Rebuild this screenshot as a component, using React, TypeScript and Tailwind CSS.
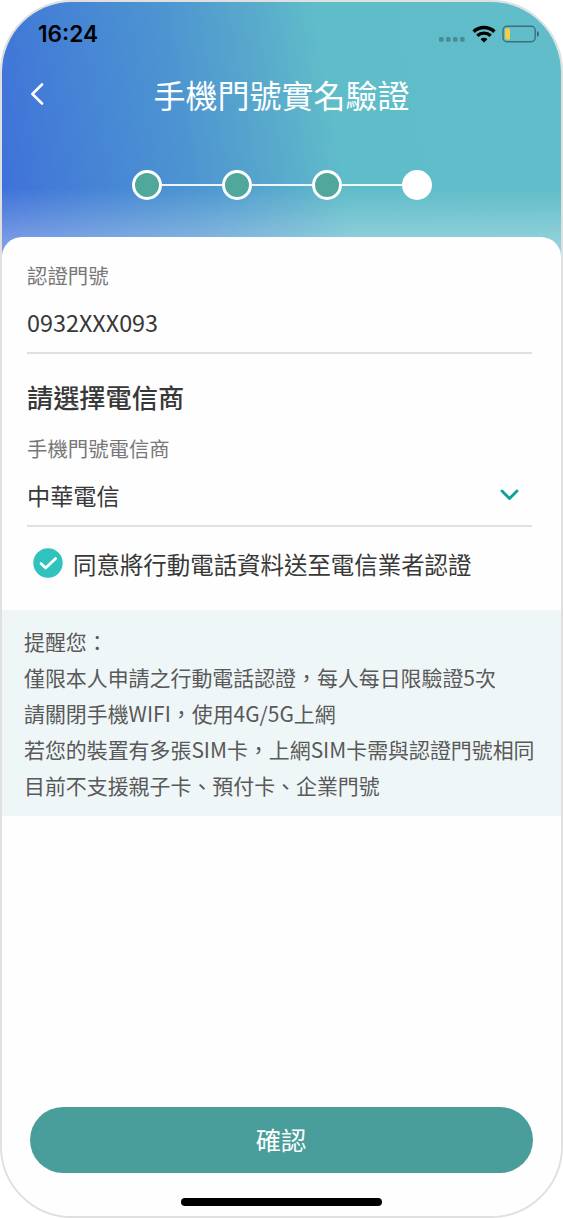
import { useState } from 'react';

const PASOS = [1, 2, 3, 4];
const PASO_ACTUAL = 4;

const AVISOS = [
    '提醒您：',
    '僅限本人申請之行動電話認證，每人每日限驗證5次',
    '請關閉手機WIFI，使用4G/5G上網',
    '若您的裝置有多張SIM卡，上網SIM卡需與認證門號相同',
    '目前不支援親子卡、預付卡、企業門號',
];

const StatusBar = () => (
    <div className="flex h-[64px] items-center justify-between pl-[36px] pr-[21px]">
        <span className="font-['Inter',sans-serif] text-[22.7px] font-semibold leading-none text-black">16:24</span>
        <div className="flex items-center">
            <svg width="28" height="20" viewBox="0 0 28 20" fill="#000" fillOpacity="0.25">
                <rect x="0" y="13" width="4.6" height="4.8" rx="1.4" />
                <rect x="7" y="13" width="4.6" height="4.8" rx="1.4" />
                <rect x="14" y="13" width="4.6" height="4.8" rx="1.4" />
                <rect x="21" y="13" width="4.6" height="4.8" rx="1.4" />
            </svg>
            <svg className="ml-[5px]" width="24" height="18" viewBox="0 0 24 18" fill="none" stroke="#000">
                <path d="M1.6 6.6 A15.2 15.2 0 0 1 22.4 6.6" strokeWidth="3.5" />
                <path d="M5.3 10.8 A9.8 9.8 0 0 1 18.7 10.8" strokeWidth="3.3" />
                <path d="M12 17.4 L8.6 14.2 A4.8 4.8 0 0 1 15.4 14.2 Z" fill="#000" stroke="none" />
            </svg>
            <svg className="ml-[6px]" width="38" height="18" viewBox="0 0 38 18" fill="none">
                <rect x="1" y="1.2" width="32.2" height="15.6" rx="4" stroke="#000" strokeOpacity="0.4" strokeWidth="1.4" />
                <rect x="3.2" y="3.2" width="4.8" height="11.6" rx="1.8" fill="#f7cd45" />
                <path d="M35 6 C37.6 7 37.6 11 35 12 Z" fill="#000" fillOpacity="0.45" />
            </svg>
        </div>
    </div>
);

const Pasos = () => (
    <div className="flex h-[30px] items-center justify-center">
        {PASOS.map((paso) => (
            <div key={paso} className="flex items-center">
                {paso > 1 && <div className="h-[2px] w-[60px] bg-white/90" />}
                <div
                    className={`size-[30px] rounded-full border-3 border-white ${
                        paso < PASO_ACTUAL ? 'bg-[#50a79b]' : 'bg-white'
                    }`}
                />
            </div>
        ))}
    </div>
);

export default function App() {
    const [acepta, setAcepta] = useState(true);

    return (
        <div
            lang="zh-Hant"
            className="flex h-[1218px] w-[563px] flex-col overflow-hidden rounded-[72px] border-2 border-[#e0e0e0] bg-[#fefefe] font-['Noto_Sans_CJK_TC',sans-serif]"
        >
            <header className="h-[259px] shrink-0 bg-[linear-gradient(to_bottom,transparent_186px,rgba(255,255,255,0.36)_250px),linear-gradient(80deg,#3f6fda_0%,#4480d6_14%,#4d95d1_34%,#58a9cc_48%,#5fbcc9_59%,#60bdc9_100%)]">
                <StatusBar />
                <div className="flex h-[56px] items-center px-[28px]">
                    <button type="button" aria-label="返回" className="w-[30px]">
                        <svg width="15" height="22" viewBox="0 0 15 22" fill="none" stroke="#fff" strokeWidth="2.6" strokeLinecap="round" strokeLinejoin="round">
                            <path d="M12 1.5 L2.4 11 L12 20.5" />
                        </svg>
                    </button>
                    <h1 className="flex-1 text-center text-[32px] leading-none text-white">手機門號實名驗證</h1>
                    <div className="w-[30px]" />
                </div>
                <div className="pt-12">
                    <Pasos />
                </div>
            </header>

            <main className="-mt-6 flex flex-1 flex-col rounded-t-[20px] bg-[#fefefe]">
                <div className="px-[25px] pr-[29px]">
                    {/* Número a verificar */}
                    <div className="flex h-[117px] flex-col border-b-2 border-[#e0e0e0] pt-[23px]">
                        <span className="text-[20.4px] leading-[30px] text-[#777]">認證門號</span>
                        <span className="mt-[15px] text-[23.4px] leading-[34px] text-[#383838]">0932XXX093</span>
                    </div>

                    {/* Operadora */}
                    <h2 className="mt-[24px] text-[26.2px] font-medium leading-[38px] text-[#383838]">請選擇電信商</h2>
                    <div className="flex h-[111px] flex-col border-b-2 border-[#e0e0e0] pt-[17px]">
                        <span className="text-[20.4px] leading-[30px] text-[#777]">手機門號電信商</span>
                        <button type="button" className="mt-[15px] flex items-center justify-between pr-[13px] text-[23.2px] leading-[34px] text-[#383838]">
                            中華電信
                            <svg className="mt-px" width="19" height="13" viewBox="0 0 19 13" fill="none" stroke="#0aa19c" strokeWidth="2.8" strokeLinecap="round" strokeLinejoin="round">
                                <path d="M2 2 L9.5 9.6 L17 2" />
                            </svg>
                        </button>
                    </div>

                    <button
                        type="button"
                        onClick={() => setAcepta(!acepta)}
                        className="flex h-[83px] items-start gap-[10px] whitespace-nowrap pl-[6px] pt-[20px] text-[23.45px] leading-[34px] text-[#383838]"
                    >
                        <svg className="mt-[1px]" width="30" height="30" viewBox="0 0 30 30" fill="none">
                            <circle cx="15" cy="15" r="14.7" fill={acepta ? '#30c3bd' : '#d0d0d0'} />
                            <path d="M8 15.6 L12.7 20.1 L22.6 10.6" stroke="#fff" strokeWidth="2.8" strokeLinecap="round" strokeLinejoin="round" />
                        </svg>
                        同意將行動電話資料送至電信業者認證
                    </button>
                </div>

                <div className="h-[206px] bg-[#eff6f8] py-[13px] pl-[22px] text-[20.93px] leading-[36px] text-[#595959]">
                    {AVISOS.map((aviso) => (
                        <p key={aviso} className="whitespace-nowrap">{aviso}</p>
                    ))}
                </div>

                <div className="mt-auto flex flex-col items-center pb-[10px] pr-px">
                    <button type="button" className="h-[66px] w-[503px] rounded-full bg-[#499e9b] text-[25.3px] text-white">
                        確認
                    </button>
                    <div className="mt-[25px] h-2 w-[201px] rounded-full bg-black" />
                </div>
            </main>
        </div>
    );
}
